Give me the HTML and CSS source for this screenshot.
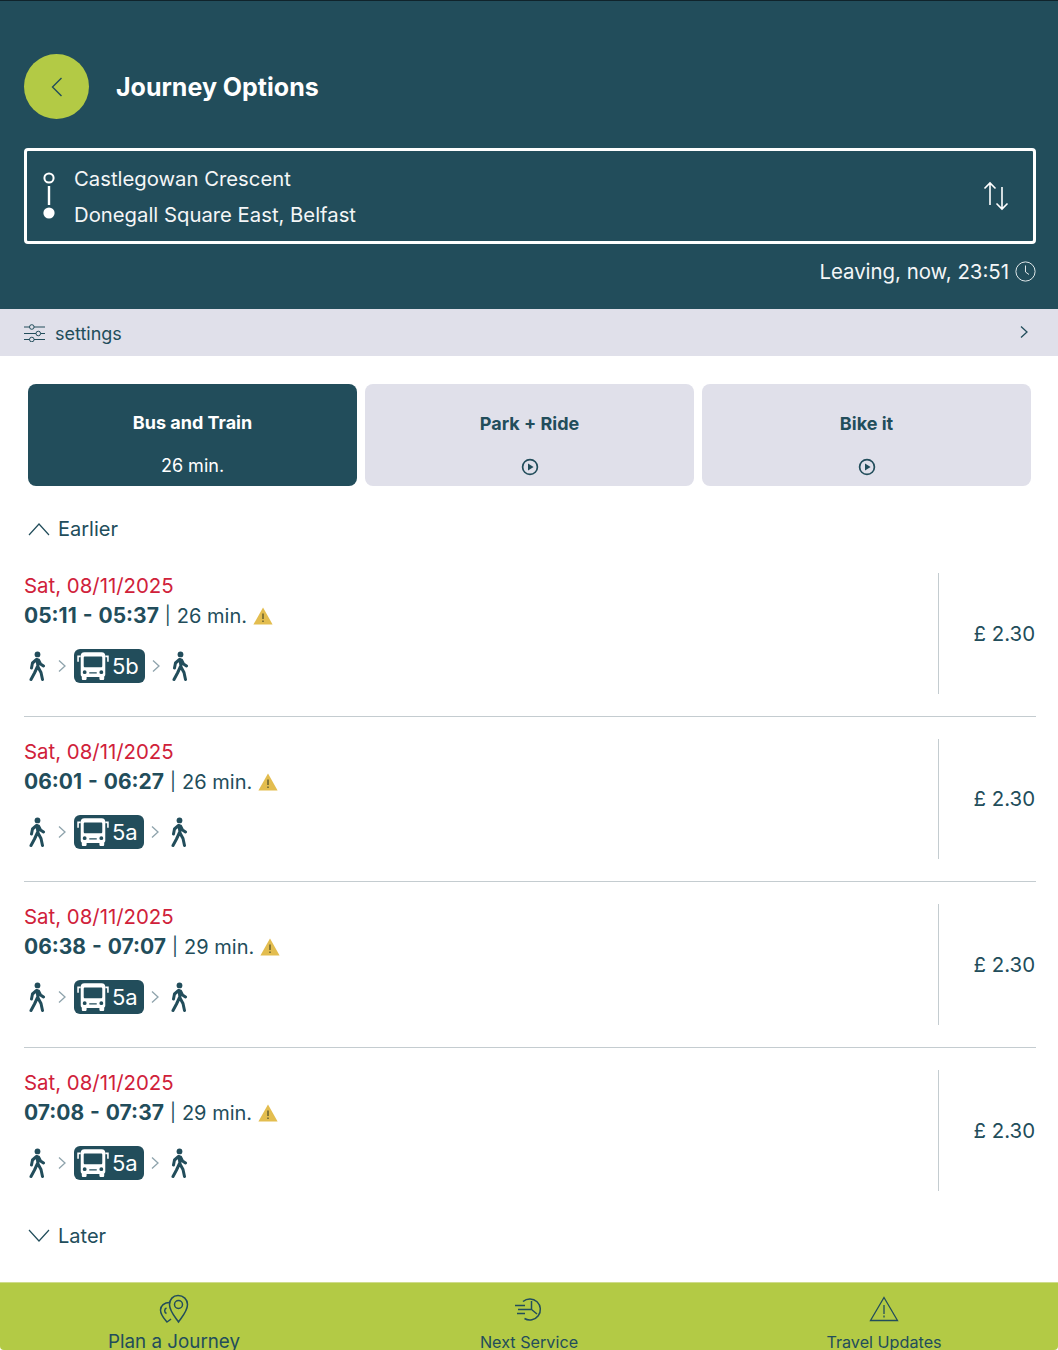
FILE: index.html
```html
<!DOCTYPE html>
<html lang="en">
<head>
    <meta charset="UTF-8">
    <meta name="viewport" content="width=device-width, initial-scale=1.0">
    <title>Journey Options</title>
    <link rel="stylesheet" href="styles.css">
</head>
<body>
    <svg class="sprite" aria-hidden="true">
        <symbol id="walk" viewBox="0 0 20 30">
            <circle cx="10.5" cy="3.4" r="2.9" fill="currentColor"/>
            <path d="M9.5 8.5 L5.5 12 L4.5 17 M10 8.5 L11 15.5 M11.5 9 L13.5 13 L16.5 15 M10.5 15.5 L7.5 22 L4 28.5 M11 16 L14 21.500 L15.500 28.5" fill="none" stroke="currentColor" stroke-width="3" stroke-linecap="round" stroke-linejoin="round"/>
        </symbol>
        <symbol id="bus" viewBox="0 0 30 28">
            <path fill-rule="evenodd" fill="currentColor" d="M7 1 H23 C25.500 1 26.500 2.500 26.500 4.500 V22 C26.500 23 26 23.500 25.500 23.800 V26 C25.500 26.800 25 27.200 24.300 27.200 H22.300 C21.600 27.200 21 26.800 21 26 V24.200 H9 V26 C9 26.800 8.400 27.200 7.700 27.200 H5.700 C5 27.200 4.500 26.800 4.500 26 V23.800 C4 23.500 3.500 23 3.500 22 V4.500 C3.500 2.500 4.500 1 7 1 Z M7.500 5 C6.700 5 6.300 5.400 6.300 6.200 V14 C6.300 14.800 6.700 15.200 7.500 15.200 H22.500 C23.300 15.200 23.700 14.800 23.700 14 V6.200 C23.700 5.400 23.300 5 22.500 5 Z M7.200 18 A1.800 1.800 0 1 0 7.200 21.600 A1.800 1.800 0 1 0 7.200 18 Z M22.800 18 A1.800 1.800 0 1 0 22.800 21.600 A1.800 1.800 0 1 0 22.800 18 Z M11.500 19.800 V21 H18.500 V19.800 Z"/>
            <path d="M3.500 5 H1 V10 M26.500 5 H29 V10" fill="none" stroke="currentColor" stroke-width="1.500"/>
        </symbol>
        <symbol id="warn" viewBox="0 0 20 18">
            <path d="M10 .5 L19.600 17.500 H.4 Z" fill="#e3bd4f"/>
            <path d="M10 6.500 V12 M10 13.500 V15" stroke="#5f5a2c" stroke-width="1.400"/>
        </symbol>
        <symbol id="chev" viewBox="0 0 10 14">
            <path d="M2 1.500 L8 7 L2 12.500" fill="none" stroke="currentColor" stroke-width="1.300"/>
        </symbol>
        <symbol id="play" viewBox="0 0 18 18">
            <circle cx="9" cy="9" r="7.400" fill="none" stroke="currentColor" stroke-width="1.700"/>
            <path d="M7 5.600 L12.600 9 L7 12.400 Z" fill="currentColor"/>
        </symbol>
    </svg>

    <header class="top">
        <div class="title-row">
            <a class="back-btn">
                <svg width="14" height="20" viewBox="0 0 14 20"><path d="M11.500 1 L2.500 10 L11.500 19" fill="none" stroke="#224d5b" stroke-width="1.400"/></svg>
            </a>
            <h1>Journey Options</h1>
        </div>
        <div class="route-box">
            <svg class="route-line" width="12" height="50" viewBox="0 0 12 50">
                <circle cx="6" cy="6" r="4.600" fill="none" stroke="#fff" stroke-width="2"/>
                <rect x="4.800" y="14" width="2.400" height="19" fill="#fff"/>
                <circle cx="6" cy="41" r="5.600" fill="#fff"/>
            </svg>
            <div class="route-stops">
                <div>Castlegowan Crescent</div>
                <div>Donegall Square East, Belfast</div>
            </div>
            <svg class="swap" width="26" height="30" viewBox="0 0 26 30">
                <path d="M7 24 V2 M1.500 7.500 L7 2 L12.500 7.500 M19 6 V28 M13.500 22.500 L19 28 L24.500 22.500" fill="none" stroke="#fff" stroke-width="1.600"/>
            </svg>
        </div>
        <div class="leaving">
            <span>Leaving, now, 23:51</span>
            <svg class="clock" width="21" height="21" viewBox="0 0 21 21"><circle cx="10.500" cy="10.500" r="9.600" fill="none" stroke="#dfe6e8" stroke-width="1"/><path d="M10.500 4.500 V11 L14 13.500" fill="none" stroke="#dfe6e8" stroke-width="1"/></svg>
        </div>
    </header>

    <div class="settings">
        <svg width="21" height="18" viewBox="0 0 21 18">
            <g fill="none" stroke="#224d5b" stroke-width="1">
                <path d="M0 3 H5.500 M10 3 H21 M0 9.500 H12 M16.500 9.500 H21 M0 15.500 H5.500 M10 15.500 H21"/>
                <circle cx="7.800" cy="3" r="2.300"/><circle cx="14.300" cy="9.500" r="2.300"/><circle cx="7.800" cy="15.500" r="2.300"/>
            </g>
        </svg>
        <span>settings</span>
        <svg class="settings-chev" width="10" height="14"><use href="#chev"/></svg>
    </div>

    <div class="tabs">
        <div class="tab active">
            <strong>Bus and Train</strong>
            <span>26 min.</span>
        </div>
        <div class="tab">
            <strong>Park + Ride</strong>
            <svg width="18" height="18"><use href="#play"/></svg>
        </div>
        <div class="tab">
            <strong>Bike it</strong>
            <svg width="18" height="18"><use href="#play"/></svg>
        </div>
    </div>

    <div class="pager pager-earlier">
        <svg width="22" height="14" viewBox="0 0 22 14"><path d="M1 13 L11 2 L21 13" fill="none" stroke="#224d5b" stroke-width="1.200"/></svg>
        <span>Earlier</span>
    </div>

    <div class="journeys">
        <div class="journey">
            <div class="journey-main">
                <div class="date">Sat, 08/11/2025</div>
                <div class="times"><b>05:11 - 05:37</b><span class="sep">|</span><span>26 min.</span><svg class="warn" width="20" height="18"><use href="#warn"/></svg></div>
                <div class="legs">
                    <svg class="walk" width="20" height="30"><use href="#walk"/></svg>
                    <svg class="leg-chev" width="10" height="14"><use href="#chev"/></svg>
                    <div class="bus-badge"><svg width="32" height="30"><use href="#bus"/></svg><span>5b</span></div>
                    <svg class="leg-chev" width="10" height="14"><use href="#chev"/></svg>
                    <svg class="walk" width="20" height="30"><use href="#walk"/></svg>
                </div>
            </div>
            <div class="price">£ 2.30</div>
        </div>
        <div class="journey">
            <div class="journey-main">
                <div class="date">Sat, 08/11/2025</div>
                <div class="times"><b>06:01 - 06:27</b><span class="sep">|</span><span>26 min.</span><svg class="warn" width="20" height="18"><use href="#warn"/></svg></div>
                <div class="legs">
                    <svg class="walk" width="20" height="30"><use href="#walk"/></svg>
                    <svg class="leg-chev" width="10" height="14"><use href="#chev"/></svg>
                    <div class="bus-badge"><svg width="32" height="30"><use href="#bus"/></svg><span>5a</span></div>
                    <svg class="leg-chev" width="10" height="14"><use href="#chev"/></svg>
                    <svg class="walk" width="20" height="30"><use href="#walk"/></svg>
                </div>
            </div>
            <div class="price">£ 2.30</div>
        </div>
        <div class="journey">
            <div class="journey-main">
                <div class="date">Sat, 08/11/2025</div>
                <div class="times"><b>06:38 - 07:07</b><span class="sep">|</span><span>29 min.</span><svg class="warn" width="20" height="18"><use href="#warn"/></svg></div>
                <div class="legs">
                    <svg class="walk" width="20" height="30"><use href="#walk"/></svg>
                    <svg class="leg-chev" width="10" height="14"><use href="#chev"/></svg>
                    <div class="bus-badge"><svg width="32" height="30"><use href="#bus"/></svg><span>5a</span></div>
                    <svg class="leg-chev" width="10" height="14"><use href="#chev"/></svg>
                    <svg class="walk" width="20" height="30"><use href="#walk"/></svg>
                </div>
            </div>
            <div class="price">£ 2.30</div>
        </div>
        <div class="journey">
            <div class="journey-main">
                <div class="date">Sat, 08/11/2025</div>
                <div class="times"><b>07:08 - 07:37</b><span class="sep">|</span><span>29 min.</span><svg class="warn" width="20" height="18"><use href="#warn"/></svg></div>
                <div class="legs">
                    <svg class="walk" width="20" height="30"><use href="#walk"/></svg>
                    <svg class="leg-chev" width="10" height="14"><use href="#chev"/></svg>
                    <div class="bus-badge"><svg width="32" height="30"><use href="#bus"/></svg><span>5a</span></div>
                    <svg class="leg-chev" width="10" height="14"><use href="#chev"/></svg>
                    <svg class="walk" width="20" height="30"><use href="#walk"/></svg>
                </div>
            </div>
            <div class="price">£ 2.30</div>
        </div>
    </div>

    <div class="pager pager-later">
        <svg width="22" height="14" viewBox="0 0 22 14"><path d="M1 1 L11 12 L21 1" fill="none" stroke="#224d5b" stroke-width="1.200"/></svg>
        <span>Later</span>
    </div>

    <nav class="bottom-nav">
        <div class="nav-item nav-plan">
            <svg width="32" height="30" viewBox="0 0 32 30" fill="none" stroke="#224d5b" stroke-width="1.500">
                <path d="M20 1.500 C25.500 1.500 29.500 5.500 29.500 10.500 C29.500 17 24 23 20.500 28 C17 23 11.500 17 11.500 10.500 C11.500 5.500 15 1.500 20 1.500 Z"/>
                <circle cx="20.500" cy="10.500" r="4"/>
                <path d="M11.500 8.500 C6.500 8.500 2.500 11.500 2.500 16 C2.500 21 6 24.500 9 28 C10.500 27 12 26 13 25 M8.500 14 A3 3 0 0 0 8.500 19.500"/>
            </svg>
            <span>Plan a Journey</span>
        </div>
        <div class="nav-item">
            <svg width="30" height="24" viewBox="0 0 30 24" fill="none" stroke="#224d5b" stroke-width="1.500">
                <path d="M9 4.500 A10.500 10.500 0 1 1 10.500 21.500 M17.500 4 V12.500 L23 17 M1 8.500 H11 M4 12.500 H17 M3 16.500 H11"/>
            </svg>
            <span>Next Service</span>
        </div>
        <div class="nav-item">
            <svg width="30" height="26" viewBox="0 0 30 26" fill="none" stroke="#224d5b" stroke-width="1.300">
                <path d="M15 1.500 L28.500 24.500 H1.500 Z M15 9 V18 M15 19.500 V21.500"/>
            </svg>
            <span>Travel Updates</span>
        </div>
    </nav>
</body>
</html>
```

FILE: styles.css
```css
html, body {
    height: 1350px;
    overflow: hidden;
}
body {
    margin: 0;
    background-color: #fff;
    color: #224d5b;
    font-family: Inter, 'Liberation Sans', sans-serif;
    display: flex;
    flex-direction: column;
}
svg {
    display: block;
    flex-shrink: 0;
}
.sprite {
    display: none;
}

/* header */
.top {
    background-color: #224d5b;
    border-top: 1px solid #10232b;
    height: 309px;
    flex-shrink: 0;
    box-sizing: border-box;
    padding: 53px 22px 0 24px;
    color: #fff;
}
.title-row {
    display: flex;
    align-items: center;
    gap: 27px;
    margin-bottom: 29px;
}
.back-btn {
    width: 65px;
    height: 65px;
    border-radius: 50%;
    background-color: #b3ca45;
    display: flex;
    justify-content: center;
    align-items: center;
}
.title-row h1 {
    margin: 0;
    font-size: 25px;
    font-weight: 700;
    line-height: 30px;
}
.route-box {
    height: 96px;
    box-sizing: border-box;
    border: 3px solid #fff;
    border-radius: 4px;
    display: flex;
    align-items: center;
    padding: 0 24px 0 16px;
}
.route-line {
    margin-right: 19px;
    margin-top: 2px;
}
.route-stops {
    flex: 1;
    margin-top: 1px;
    font-size: 20.300px;
    line-height: 36px;
    color: #f4f6f7;
}
.leaving {
    display: flex;
    justify-content: flex-end;
    align-items: center;
    gap: 6px;
    margin-top: 16px;
    font-size: 20.400px;
    line-height: 24px;
    color: #f4f6f7;
}
.clock {
    margin-top: -2px;
}

/* settings bar */
.settings {
    height: 47px;
    flex-shrink: 0;
    box-sizing: border-box;
    padding: 1px 29px 0 24px;
    background-color: #e0e0ea;
    display: flex;
    align-items: center;
    font-size: 18px;
}
.settings span {
    flex: 1;
    margin-left: 10px;
}
.settings-chev {
    color: #224d5b;
    margin-top: -3px;
}

/* mode tabs */
.tabs {
    display: grid;
    grid-template-columns: repeat(3, 329px);
    gap: 8px;
    padding: 28px 0 0 28px;
}
.tab {
    height: 102px;
    box-sizing: border-box;
    padding-top: 28px;
    border-radius: 8px;
    background-color: #e0e0ea;
    display: flex;
    flex-direction: column;
    align-items: center;
    font-size: 18px;
    line-height: 24px;
}
.tab strong {
    font-weight: 700;
    margin-bottom: 22px;
}
.tab.active {
    padding-top: 27px;
    background-color: #224d5b;
    color: #fff;
}
.tab.active strong {
    margin-bottom: 19px;
}

/* earlier / later */
.pager {
    display: flex;
    align-items: center;
    gap: 8px;
    height: 30px;
    padding-left: 28px;
    font-size: 20px;
}
.pager-earlier {
    margin: 28px 0 7px;
}
.pager-later {
    margin-top: 8px;
}

/* journey list */
.journeys {
    padding: 0 22px 0 24px;
}
.journey {
    display: flex;
    padding: 22px 0;
    height: 120.670px;
    border-bottom: 1px solid #c4ccd0;
}
.journey:last-child {
    border-bottom: none;
}
.journey-main {
    width: 914px;
    border-right: 1px solid #c4ccd0;
}
.date {
    color: #d0213a;
    font-size: 20.400px;
    line-height: 26px;
}
.times {
    display: flex;
    align-items: center;
    margin-top: 4px;
    font-size: 20px;
    line-height: 26px;
}
.times b {
    font-weight: 700;
    font-size: 21px;
    word-spacing: 1px;
}
.sep {
    margin: 0 6px;
    font-size: 18px;
}
.warn {
    margin-left: 6px;
}
.legs {
    display: flex;
    align-items: center;
    height: 36px;
    margin-top: 19px;
}
.walk {
    margin-left: 3px;
}
.legs .leg-chev {
    color: #8ea3ac;
    margin: 0 7px 0 10px;
}
.bus-badge + .leg-chev {
    margin: 0 9px 0 6px;
}
.legs .leg-chev + .walk {
    margin-left: 0;
}
.bus-badge {
    display: flex;
    align-items: center;
    gap: 3px;
    height: 34px;
    padding: 0 6px 0 3px;
    border-radius: 6px;
    background-color: #224d5b;
    color: #fff;
    font-size: 22px;
}
.price {
    flex: 1;
    align-self: center;
    text-align: right;
    font-size: 20.400px;
    padding-right: 1px;
}

/* bottom nav */
.bottom-nav {
    margin-top: auto;
    height: 68px;
    flex-shrink: 0;
    overflow: hidden;
    box-sizing: border-box;
    border-top: 1px solid #cfdc8c;
    border-radius: 0 0 4px 4px;
    background-color: #b3ca45;
    display: grid;
    grid-template-columns: 348px 362px 348px;
}
.nav-item {
    display: flex;
    flex-direction: column;
    align-items: center;
    padding-top: 11px;
    font-size: 16.200px;
    line-height: 16px;
}
.nav-item svg {
    height: 30px;
    margin-bottom: 10px;
}
.nav-plan {
    font-size: 18.800px;
}
```
